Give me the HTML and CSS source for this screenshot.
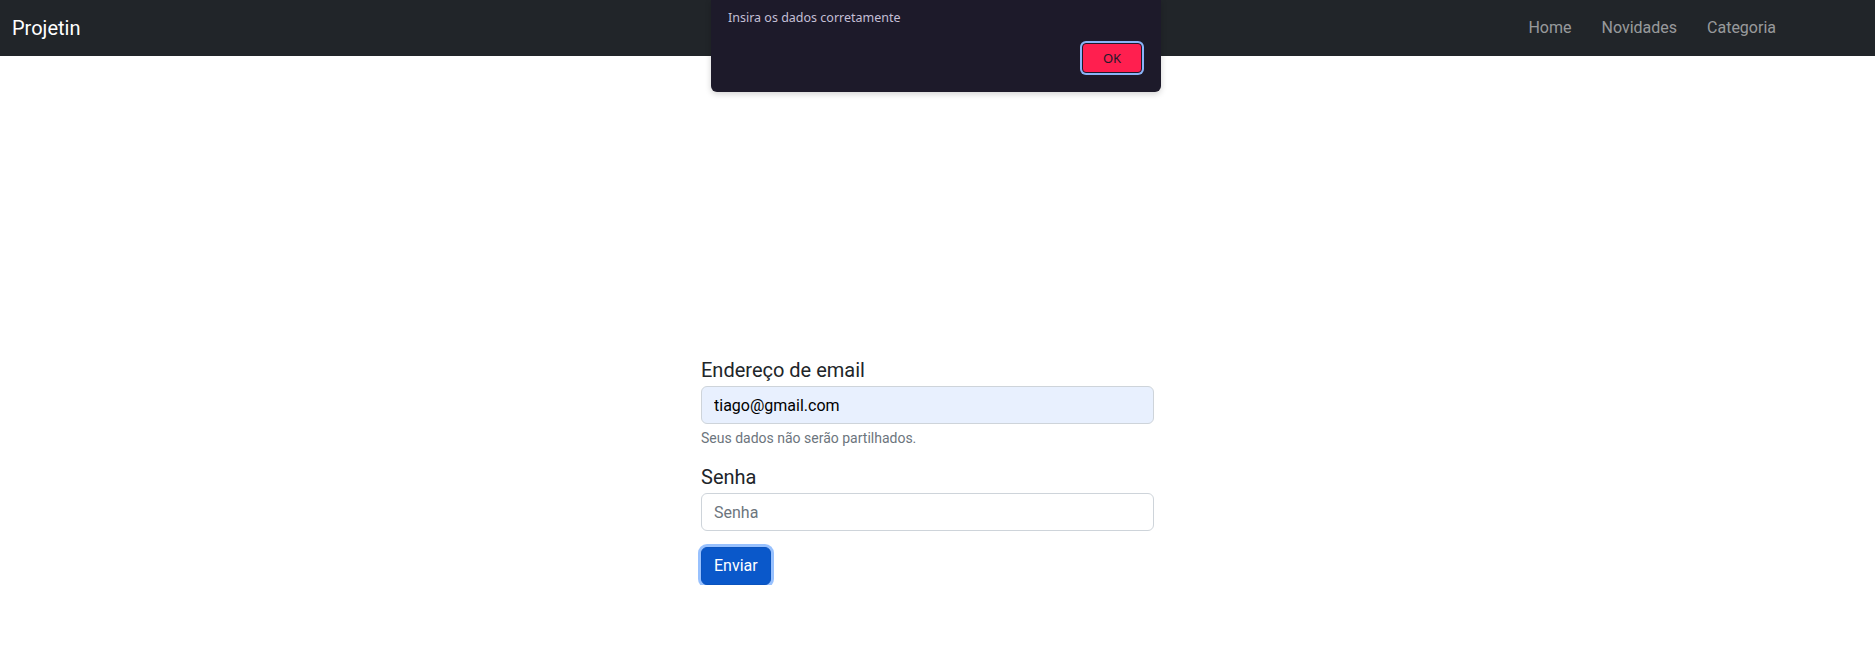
FILE: index.html
```html
<!DOCTYPE html>
<html lang="pt">
<head>
<meta charset="utf-8">
<title>Projetin</title>
<link rel="stylesheet" href="styles.css">
</head>
<body>
<nav class="navbar">
  <a class="brand" href="#">Projetin</a>
  <ul class="nav-links">
    <li><a href="#">Home</a></li>
    <li><a href="#">Novidades</a></li>
    <li><a href="#">Categoria</a></li>
  </ul>
</nav>

<main class="page">
  <form class="login-form">
    <div class="field">
      <label class="field-label" for="email">Endereço de email</label>
      <input class="field-input autofilled" id="email" type="email" value="tiago@gmail.com">
      <div class="field-help">Seus dados não serão partilhados.</div>
    </div>
    <div class="field">
      <label class="field-label" for="senha">Senha</label>
      <input class="field-input" id="senha" type="password" placeholder="Senha">
    </div>
    <button class="btn-submit" type="button">Enviar</button>
  </form>
</main>

<div class="alert-dialog">
  <p class="alert-message">Insira os dados corretamente</p>
  <div class="alert-actions">
    <button class="alert-ok" type="button">OK</button>
  </div>
</div>
</body>
</html>
```

FILE: styles.css
```css
* { box-sizing: border-box; }

html, body {
  margin: 0;
  padding: 0;
  background: #ffffff;
  font-family: Roboto, "Liberation Sans", Arial, sans-serif;
  color: #212529;
}

.navbar {
  height: 56px;
  background: #212529;
  display: flex;
  align-items: center;
  justify-content: space-between;
  padding: 0 99px 0 12px;
}

.brand {
  color: #ffffff;
  font-size: 20px;
  line-height: 30px;
  text-decoration: none;
}

.nav-links {
  list-style: none;
  margin: 0;
  padding: 0;
  display: flex;
  gap: 30px;
}

.nav-links a {
  color: rgba(255, 255, 255, 0.55);
  font-size: 16px;
  line-height: 24px;
  text-decoration: none;
}

.page {
  padding: 302px 0 0 701px;
}

.login-form {
  width: 453px;
}

.field {
  margin-bottom: 16px;
}

.field-label {
  display: block;
  font-size: 20px;
  line-height: 24px;
  margin-bottom: 4px;
  color: #212529;
}

.field-input {
  display: block;
  width: 100%;
  height: 38px;
  padding: 6px 12px;
  font-family: Roboto, "Liberation Sans", Arial, sans-serif;
  font-size: 16px;
  line-height: 24px;
  color: #212529;
  background: #ffffff;
  border: 1px solid #ced4da;
  border-radius: 6px;
  outline: none;
}

.field-input::placeholder {
  color: #6c757d;
}

.field-input.autofilled {
  background: #e8f0fe;
  color: #000000;
}

.field-help {
  margin-top: 4px;
  font-size: 14px;
  line-height: 21px;
  color: #6c757d;
}

.btn-submit {
  display: inline-block;
  height: 38px;
  padding: 6px 12px;
  font-family: Roboto, "Liberation Sans", Arial, sans-serif;
  font-size: 16px;
  line-height: 24px;
  color: #ffffff;
  background: #0a58ca;
  border: 1px solid #0a53be;
  border-radius: 6px;
  box-shadow: 0 0 0 3px rgba(49, 132, 253, 0.5);
  cursor: pointer;
}

.alert-dialog {
  position: absolute;
  top: 0;
  left: 711px;
  width: 450px;
  height: 92px;
  background: #1d1a2a;
  border-radius: 0 0 6px 6px;
  box-shadow: 0 2px 6px rgba(0, 0, 0, 0.18);
  padding: 9px 17px 17px 17px;
  display: flex;
  flex-direction: column;
  justify-content: space-between;
}

.alert-message {
  margin: 0;
  font-family: "Noto Sans", "Open Sans", sans-serif;
  font-size: 12.5px;
  line-height: 17px;
  color: #c4bfd6;
}

.alert-actions {
  display: flex;
  justify-content: flex-end;
}

.alert-ok {
  width: 60px;
  height: 30px;
  margin: 2px;
  background: #ff1f4f;
  border: 1px solid #1d1a2a;
  border-radius: 4px;
  box-shadow: 0 0 0 2px #8ab4f8;
  font-family: "Noto Sans", "Open Sans", sans-serif;
  font-size: 13px;
  color: #1d1a2a;
  padding: 0;
}
```
